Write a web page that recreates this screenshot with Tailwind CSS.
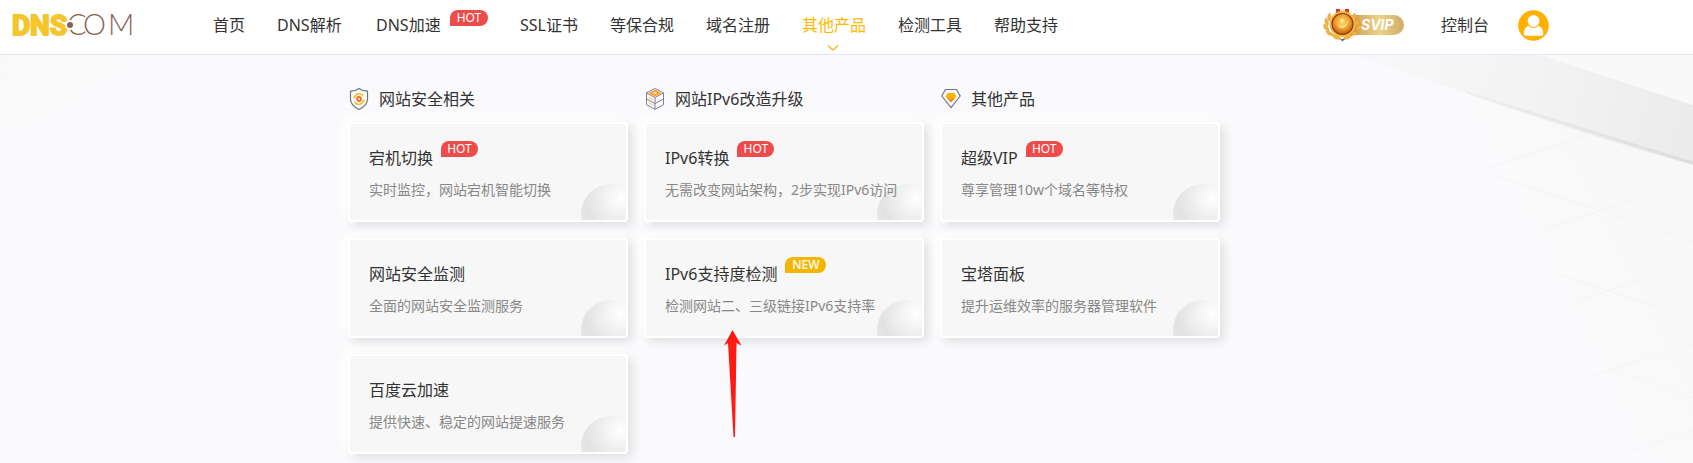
<!DOCTYPE html>
<html lang="zh-CN">

<head>
  <meta charset="UTF-8" />
  <meta name="viewport" content="width=device-width, initial-scale=1" />
  <title>DNS.COM</title>
  <script src="https://cdn.jsdelivr.net/npm/@tailwindcss/browser@4"></script>
</head>

<body class="min-h-screen bg-[#fafafc] font-['Noto_Sans','Noto_Sans_CJK_SC',sans-serif] text-base text-[#333]">

  <!-- Header -->
  <header class="flex h-[55px] items-center justify-between border-b border-[#e0e7f7] bg-white pr-36 pb-1 pl-3">
    <div class="flex items-center">
      <a href="#" aria-label="DNS.COM" class="mr-[73px] block">
        <svg class="block overflow-visible" width="128" height="44" viewBox="0 0 128 44">
          <text x="0 18 38" y="32" font-family="'Liberation Sans Narrow','Roboto',sans-serif" font-weight="700" font-size="28" fill="#f5c52c" stroke="#f5c52c" stroke-width="2" stroke-linejoin="round">DNS</text>
          <text x="55 71 96" y="32" font-family="Lato,sans-serif" font-weight="300" font-size="29" fill="#8a6256">COM</text>
          <circle cx="58" cy="22" r="5" fill="#fff" />
          <circle cx="58" cy="22" r="3" fill="#8a6256" />
        </svg>
      </a>
      <nav>
        <ul class="flex gap-8 leading-6 whitespace-nowrap">
          <li><a href="#" class="hover:text-[#ffb800]">首页</a></li>
          <li class="w-[67px]"><a href="#" class="hover:text-[#ffb800]">DNS解析</a></li>
          <li class="flex">
            <a href="#" class="w-[67px] hover:text-[#ffb800]">DNS加速</a>
            <span class="-mt-[3px] ml-[7px] h-4 w-[38px] rounded-lg rounded-bl-none bg-[#ee4b4b] text-center text-xs leading-4 text-white">HOT</span>
          </li>
          <li><a href="#" class="hover:text-[#ffb800]">SSL证书</a></li>
          <li><a href="#" class="hover:text-[#ffb800]">等保合规</a></li>
          <li><a href="#" class="hover:text-[#ffb800]">域名注册</a></li>
          <li class="relative">
            <a href="#" class="text-[#ffb800]">其他产品</a>
            <svg class="absolute top-[31px] left-[25px]" width="12" height="8" viewBox="0 0 12 8" fill="none" stroke="#ffb535" stroke-width="1.6"><path d="M1 1.5l5 4.5 5-4.5" /></svg>
          </li>
          <li><a href="#" class="hover:text-[#ffb800]">检测工具</a></li>
          <li><a href="#" class="hover:text-[#ffb800]">帮助支持</a></li>
        </ul>
      </nav>
    </div>

    <div class="flex items-center">
      <a href="#" class="mr-9 block">
        <svg class="block" width="82" height="34" viewBox="0 0 82 34">
          <defs>
            <linearGradient id="pill" x1="0" x2="1" y1="0" y2="0">
              <stop offset="0" stop-color="#c99a4d" />
              <stop offset=".55" stop-color="#ecd28a" />
              <stop offset="1" stop-color="#d0ac66" />
            </linearGradient>
            <radialGradient id="medal" cx=".5" cy=".4" r=".6">
              <stop offset="0" stop-color="#ffd873" />
              <stop offset=".6" stop-color="#ee9a2b" />
              <stop offset="1" stop-color="#b8560f" />
            </radialGradient>
          </defs>
          <path d="M26 7h45a10 10 0 0 1 0 20H26z" fill="url(#pill)" />
          <!-- laurel -->
          <g fill="#f3b43f" stroke="#d98418" stroke-width=".4">
            <path d="M7 5c-3 2-3 5-1 8 2-3 2-5 1-8zM3 10c-2 3-1 6 2 8 1-3 0-6-2-8zM1 16c-1 4 1 6 5 7 0-3-2-6-5-7zM3 23c1 4 4 5 7 4-1-3-4-4-7-4zM9 27c2 4 5 5 9 4-2-3-5-5-9-4z" />
            <path d="M31 5c3 2 3 5 1 8-2-3-2-5-1-8zM35 10c2 3 1 6-2 8-1-3 0-6 2-8zM38 16c1 4-1 6-5 7 0-3 2-6 5-7zM35 23c-1 4-4 5-7 4 1-3 4-4 7-4zM29 27c-2 4-5 5-9 4 2-3 5-5 9-4z" />
          </g>
          <path d="M13 1h13v7H13z" fill="#cf3b2e" />
          <path d="M17 1h5v7h-5z" fill="#f4ded0" />
          <circle cx="19.5" cy="16" r="13" fill="#f5b83c" />
          <circle cx="19.5" cy="16" r="10.5" fill="url(#medal)" stroke="#8f3b10" stroke-width="1.2" />
          <path d="M14 15c2 4 8 4 11-2-1 7-8 11-11 2z" fill="#ffe486" />
          <circle cx="19" cy="12.5" r="2" fill="#ffe486" />
          <path d="M17 31l2.500 2.500L22 31z" fill="#50737c" />
          <text x="38" y="22" font-family="Inter,sans-serif" font-size="14" font-weight="700" font-style="italic" fill="#fff">SVIP</text>
        </svg>
      </a>
      <a href="#" class="mr-[29px] leading-6 hover:text-[#ffb800]">控制台</a>
      <a href="#" aria-label="用户" class="block">
        <svg class="block" width="31" height="31" viewBox="0 0 31 31">
          <circle cx="15.5" cy="15.5" r="15.3" fill="#ffb000" />
          <path d="M5.800 23.500c0-4.500 2.500-7.500 6-8.200h7.400c3.500.7 6 3.700 6 8.200 0 1.500-.7 2.300-2 2.300H7.800c-1.300 0-2-.8-2-2.300z" fill="#fff" />
          <circle cx="15.500" cy="11" r="6.500" fill="#fff" stroke="#ffb000" stroke-width="1.2" />
        </svg>
      </a>
    </div>
  </header>

  <!-- Products panel -->
  <main class="relative min-h-[calc(100vh-55px)] overflow-hidden pb-2">

    <!-- Background artwork -->
    <svg class="absolute top-0 right-0" width="500" height="408" viewBox="0 0 500 408" fill="none" aria-hidden="true">
      <defs>
        <linearGradient id="band" x1="150" y1="0" x2="500" y2="90" gradientUnits="userSpaceOnUse">
          <stop offset="0" stop-color="#f9f9fb" />
          <stop offset=".6" stop-color="#f2f2f3" />
          <stop offset="1" stop-color="#ebebeb" />
        </linearGradient>
        <linearGradient id="edge" x1="200" y1="0" x2="500" y2="110" gradientUnits="userSpaceOnUse">
          <stop offset="0" stop-color="#e4e0e3" stop-opacity="0" />
          <stop offset="1" stop-color="#dfdbde" />
        </linearGradient>
        <linearGradient id="fade" x1="360" y1="230" x2="500" y2="160" gradientUnits="userSpaceOnUse">
          <stop offset="0" stop-color="#f8f8f8" stop-opacity="0" />
          <stop offset="1" stop-color="#f8f8f8" />
        </linearGradient>
      </defs>
      <path d="M160 0L500 110V408H430Q330 150 160 0z" fill="url(#fade)" />
      <path d="M347 0H500V50z" fill="#f9f9f9" />
      <path d="M160 0H347L500 50V110Q380 77 273 38Q210 17 160 0z" fill="url(#band)" />
      <path d="M273 37Q390 75 500 108" stroke="url(#edge)" stroke-width="3" />
      <g stroke="#f4f4f6">
        <path d="M290 115L400 78M300 120L500 186M337 180L500 124M360 218L500 263M375 250L500 206M420 315L500 343M400 320L500 290M420 403L500 376" />
      </g>
    </svg>
    <svg class="absolute top-0 left-0" width="400" height="100" viewBox="0 0 400 100" fill="none" aria-hidden="true">
      <defs>
        <linearGradient id="corner" x1="0" y1="0" x2="60" y2="70" gradientUnits="userSpaceOnUse">
          <stop offset="0" stop-color="#f9f9f9" />
          <stop offset="1" stop-color="#f9f9f9" stop-opacity="0" />
        </linearGradient>
      </defs>
      <path d="M0 0H400Q170 20 0 75z" fill="url(#corner)" />
      <path d="M0 17L55 34M110 22L190 0M240 23L400 70" stroke="#f8f8fa" />
    </svg>

    <div class="relative mx-auto grid max-w-[997px] grid-cols-[repeat(3,280px)] items-start gap-4 pt-8">

      <section>
        <h2 class="mb-[11px] flex items-center gap-[10px] pl-px leading-6">
          <svg width="20" height="24" viewBox="0 0 20 24" fill="none">
            <path d="M10 1.500c2.500 2 5 2.700 8.500 2.700v8c0 5-4 8-8.500 10.300C5.500 20.200 1.500 17.200 1.500 12.200v-8C5 4.200 7.500 3.500 10 1.500z" stroke="#6e7785" stroke-width="1.2" />
            <path d="M4 10.500h1.500a5 5 0 0 1 9-1.500M16 13.500h-1.500a5 5 0 0 1-9 1.500" stroke="#fbb924" stroke-width="1.5" />
            <circle cx="10" cy="12" r="2" stroke="#f97316" stroke-width="1.8" />
          </svg>
          网站安全相关
        </h2>
        <ul class="space-y-4">
          <li>
            <a href="#" class="relative block h-[100px] overflow-hidden rounded border-2 border-white bg-[#f7f7f7] px-[19px] pt-[22px] shadow-[4px_4px_10px_#dfe0e3,-4px_-4px_10px_#ffffff]">
              <span class="absolute top-[60px] left-[231px] size-[60px] rounded-full bg-[radial-gradient(circle_at_40px_14px,#ffffff,#e2e2e2_36px,#f0f0f0)]"></span>
              <h3 class="flex leading-6">宕机切换<span class="-mt-[5px] ml-2 h-4 w-[37px] rounded-lg rounded-bl-none bg-[#ee4b4b] text-center text-xs leading-4 text-white">HOT</span></h3>
              <p class="relative mt-[10px] text-sm leading-5 whitespace-nowrap text-[#888]">实时监控，网站宕机智能切换</p>
            </a>
          </li>
          <li>
            <a href="#" class="relative block h-[100px] overflow-hidden rounded border-2 border-white bg-[#f7f7f7] px-[19px] pt-[22px] shadow-[4px_4px_10px_#dfe0e3,-4px_-4px_10px_#ffffff]">
              <span class="absolute top-[60px] left-[231px] size-[60px] rounded-full bg-[radial-gradient(circle_at_40px_14px,#ffffff,#e2e2e2_36px,#f0f0f0)]"></span>
              <h3 class="flex leading-6">网站安全监测</h3>
              <p class="relative mt-[10px] text-sm leading-5 whitespace-nowrap text-[#888]">全面的网站安全监测服务</p>
            </a>
          </li>
          <li>
            <a href="#" class="relative block h-[100px] overflow-hidden rounded border-2 border-white bg-[#f7f7f7] px-[19px] pt-[22px] shadow-[4px_4px_10px_#dfe0e3,-4px_-4px_10px_#ffffff]">
              <span class="absolute top-[60px] left-[231px] size-[60px] rounded-full bg-[radial-gradient(circle_at_40px_14px,#ffffff,#e2e2e2_36px,#f0f0f0)]"></span>
              <h3 class="flex leading-6">百度云加速</h3>
              <p class="relative mt-[10px] text-sm leading-5 whitespace-nowrap text-[#888]">提供快速、稳定的网站提速服务</p>
            </a>
          </li>
        </ul>
      </section>

      <section>
        <h2 class="mb-[11px] flex items-center gap-[10px] pl-px leading-6">
          <svg width="20" height="24" viewBox="0 0 20 24" fill="none" stroke="#7b8390" stroke-linejoin="round">
            <path d="M10 1.500l8.500 4.300v12L10 22.300l-8.500-4.500v-12z" />
            <path d="M1.500 6L10 10.500 18.500 6M10 10.500v12M10 16.500l8.500-4.500" />
            <path d="M1.500 12l8.500 4.500" />
            <path d="M3.500 10l5 2.700M3.500 15.500l5 2.700" stroke="#fbc66b" />
            <path d="M10 3l6 3-6 3.200L4 6z" fill="#ff9d1c" stroke="#ff9d1c" stroke-width=".5" />
            <path d="M10 5l2.200 1.100L10 7.200 7.800 6.100z" fill="#fff" stroke="none" />
          </svg>
          网站IPv6改造升级
        </h2>
        <ul class="space-y-4">
          <li>
            <a href="#" class="relative block h-[100px] overflow-hidden rounded border-2 border-white bg-[#f7f7f7] px-[19px] pt-[22px] shadow-[4px_4px_10px_#dfe0e3,-4px_-4px_10px_#ffffff]">
              <span class="absolute top-[60px] left-[231px] size-[60px] rounded-full bg-[radial-gradient(circle_at_40px_14px,#ffffff,#e2e2e2_36px,#f0f0f0)]"></span>
              <h3 class="flex leading-6">IPv6转换<span class="-mt-[5px] ml-2 h-4 w-[37px] rounded-lg rounded-bl-none bg-[#ee4b4b] text-center text-xs leading-4 text-white">HOT</span></h3>
              <p class="relative mt-[10px] text-sm leading-5 whitespace-nowrap text-[#888]">无需改变网站架构，2步实现IPv6访问</p>
            </a>
          </li>
          <li class="relative">
            <a href="#" class="relative block h-[100px] overflow-hidden rounded border-2 border-white bg-[#f7f7f7] px-[19px] pt-[22px] shadow-[4px_4px_10px_#dfe0e3,-4px_-4px_10px_#ffffff]">
              <span class="absolute top-[60px] left-[231px] size-[60px] rounded-full bg-[radial-gradient(circle_at_40px_14px,#ffffff,#e2e2e2_36px,#f0f0f0)]"></span>
              <h3 class="flex leading-6">IPv6支持度检测<span class="-mt-[5px] ml-2 h-4 w-[41px] rounded-lg rounded-bl-none bg-[#f6b500] text-center text-xs leading-4 font-medium text-white">NEW</span></h3>
              <p class="relative mt-[10px] text-sm leading-5 whitespace-nowrap text-[#888]">检测网站二、三级链接IPv6支持率</p>
            </a>
            <!-- Arrow pointing at the card -->
            <svg class="absolute top-[92px] left-20" width="18" height="108" viewBox="0 0 18 108" fill="#ff1a12">
              <path d="M8.500 0L17.500 15.500L12.500 13L11 107H9.500L4 13L0 15.500z" />
            </svg>
          </li>
        </ul>
      </section>

      <section>
        <h2 class="mb-[11px] flex items-center gap-[10px] pl-px leading-6">
          <svg width="20" height="24" viewBox="0 0 20 24" fill="none">
            <path d="M4.500 2.500h11l3.700 6.500L10 20.700.800 9z" stroke="#6e7785" stroke-width="1.2" stroke-linejoin="round" />
            <path d="M6.500 6h7l2 3.500-2 2.500h-1.200L10 14 7.700 12H6.500l-2-2.500z" fill="#ffb400" />
            <path d="M6.500 11.500l3.500 4 3.500-4-1.700-.3L10 13l-1.800-1.800z" fill="#ff7a1a" />
          </svg>
          其他产品
        </h2>
        <ul class="space-y-4">
          <li>
            <a href="#" class="relative block h-[100px] overflow-hidden rounded border-2 border-white bg-[#f7f7f7] px-[19px] pt-[22px] shadow-[4px_4px_10px_#dfe0e3,-4px_-4px_10px_#ffffff]">
              <span class="absolute top-[60px] left-[231px] size-[60px] rounded-full bg-[radial-gradient(circle_at_40px_14px,#ffffff,#e2e2e2_36px,#f0f0f0)]"></span>
              <h3 class="flex leading-6">超级VIP<span class="-mt-[5px] ml-2 h-4 w-[37px] rounded-lg rounded-bl-none bg-[#ee4b4b] text-center text-xs leading-4 text-white">HOT</span></h3>
              <p class="relative mt-[10px] text-sm leading-5 whitespace-nowrap text-[#888]">尊享管理10w个域名等特权</p>
            </a>
          </li>
          <li>
            <a href="#" class="relative block h-[100px] overflow-hidden rounded border-2 border-white bg-[#f7f7f7] px-[19px] pt-[22px] shadow-[4px_4px_10px_#dfe0e3,-4px_-4px_10px_#ffffff]">
              <span class="absolute top-[60px] left-[231px] size-[60px] rounded-full bg-[radial-gradient(circle_at_40px_14px,#ffffff,#e2e2e2_36px,#f0f0f0)]"></span>
              <h3 class="flex leading-6">宝塔面板</h3>
              <p class="relative mt-[10px] text-sm leading-5 whitespace-nowrap text-[#888]">提升运维效率的服务器管理软件</p>
            </a>
          </li>
        </ul>
      </section>

    </div>
  </main>

</body>

</html>
